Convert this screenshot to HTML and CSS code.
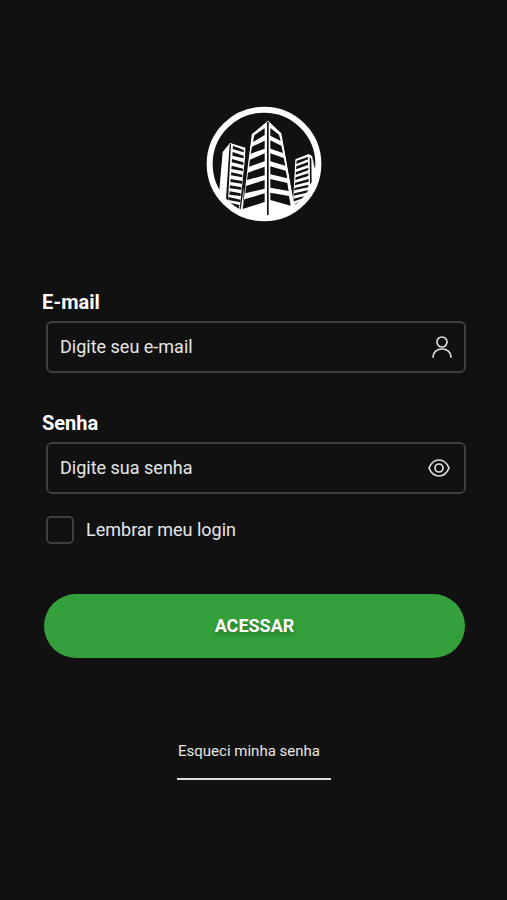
FILE: index.html
```html
<!DOCTYPE html>
<html lang="pt-BR">
<head>
<meta charset="utf-8">
<meta name="viewport" content="width=device-width, initial-scale=1">
<title>Login</title>
<link rel="stylesheet" href="styles.css">
</head>
<body>
<main class="login">
  <div class="brand">
    <svg class="logo" viewBox="0 0 384 384" role="img" aria-label="Logo">
      <defs><clipPath id="disc"><circle cx="192" cy="192" r="166"/></clipPath></defs>
      <g clip-path="url(#disc)">
        <path class="light" d="M40 260 58 270 68 156 90 129 136 143 136 190 128 326 155 103 204 62 244 100 284 318 280 290 286 178 326 162 336 168 350 210 350 384 40 384Z"/>
        <path class="dark" d="M163 106 194 84V105L159 126ZM156 140 194 122V146L152 161ZM150 179 194 160V184L147 200ZM144 218 194 200V226L141 240ZM138 258 194 240V266L136 280ZM133 298 194 280V306L128 327Z"/>
        <path class="dark" d="M211 84 237 104 242 123 211 107ZM211 121 244 137 249 159 211 146ZM211 160 251 174 256 197 211 184ZM211 199 257 212 262 235 211 223ZM211 237 262 249 266 273 211 263ZM211 278 267 288 272 317 211 300Z"/>
        <path class="dark" d="M201 66H206V346H201Z"/>
        <path class="dark" d="M89 133 93 132 84 304 78 296Z"/>
        <path class="dark" d="M99 137 131 150V157L98 147ZM98 156 131 167V175L97 167ZM96 177 130 187V195L95 187ZM95 197 129 206V213L94 207ZM94 217 127 224V232L93 226ZM92 237 126 243V251L91 246ZM90 256 124 262V269L89 265ZM89 274 122 280V288L88 284ZM86 291 121 299V307L85 300ZM82 306 118 315 117 328Z"/>
        <path class="dark" d="M137 155 155 103 122 328 119 328Z"/>
        <path class="dark" d="M290 182 324 171V178L289 192ZM289 199 324 186V195L288 208ZM288 216 325 203V211L287 224ZM287 232 325 220V228L286 240ZM286 248 326 237V245L284 256ZM284 264 325 254V262L282 271ZM283 280 326 270V277L281 287ZM281 296 314 288 309 295 282 304ZM286 311 304 301 296 312 287 315Z"/>
        <path class="dark" d="M329 170 334 178 335 246 330 254ZM336 170 354 216 345 207Z"/>
        <path class="dark" d="M246 102 285 178 278 287Z"/>
      </g>
      <circle class="ring" cx="192" cy="192" r="163"/>
    </svg>
  </div>
  <form class="form">
    <div class="field">
      <label class="label" for="email">E-mail</label>
      <div class="box">
        <input class="input" id="email" type="email" placeholder="Digite seu e-mail">
        <svg class="icon" viewBox="0 0 24 24" aria-hidden="true"><circle cx="12" cy="7" r="5"/><path d="M3 22c0-5 4-8 9-8s9 3 9 8"/></svg>
      </div>
    </div>
    <div class="field">
      <label class="label" for="senha">Senha</label>
      <div class="box box-eye">
        <input class="input" id="senha" type="password" placeholder="Digite sua senha">
        <svg class="icon" viewBox="0 0 24 24" aria-hidden="true"><path d="M2 12C4 7 8 4 12 4s8 3 10 8c-2 5-6 8-10 8S4 17 2 12Z"/><circle cx="12" cy="12" r="4"/></svg>
      </div>
    </div>
    <div class="remember">
      <input class="check" id="lembrar" type="checkbox">
      <label for="lembrar">Lembrar meu login</label>
    </div>
    <button class="submit" type="submit">ACESSAR</button>
  </form>
  <a class="forgot" href="#">Esqueci minha senha</a>
</main>
</body>
</html>
```
FILE: styles.css
```css
* { box-sizing: border-box; }
body {
  margin: 0;
  min-height: 100vh;
  background: #111;
  color: #e6e6e6;
  font-family: Roboto, "Liberation Sans", sans-serif;
  font-size: 18px;
  line-height: 24px;
}
.login {
  display: flex;
  flex-direction: column;
  padding: 100px 41px 40px 42px;
}
.brand {
  display: flex;
  justify-content: center;
  padding-left: 20px;
}
.logo { width: 128px; height: 128px; }
.light { fill: #fff; }
.dark { fill: #111; }
.ring { fill: none; stroke: #fff; stroke-width: 18; }
.form {
  display: flex;
  flex-direction: column;
  margin-top: 62px;
}
.field { margin-bottom: 37px; }
.label {
  display: block;
  margin-bottom: 7px;
  color: #fff;
  font-size: 20px;
  font-weight: 700;
  line-height: 24px;
}
.box {
  display: flex;
  align-items: center;
  height: 52px;
  margin-left: 4px;
  padding: 0 10px 0 12px;
  border: 2px solid #3f3f3f;
  border-radius: 6px;
}
.box-eye { padding-right: 13px; }
.field { margin-bottom: 38px; }
.field + .field { margin-bottom: 22px; }
.input {
  flex: 1;
  min-width: 0;
  padding: 0;
  border: 0;
  outline: 0;
  background: none;
  color: inherit;
  font: inherit;
}
.input::placeholder { color: #e6e6e6; opacity: 1; }
.icon {
  width: 24px;
  height: 24px;
  fill: none;
  stroke: #ddd;
  stroke-width: 1.7;
  stroke-linecap: round;
}
.remember {
  display: flex;
  align-items: center;
  gap: 12px;
  margin-left: 4px;
}
.check {
  appearance: none;
  width: 28px;
  height: 28px;
  margin: 0;
  border: 2px solid #3f3f3f;
  border-radius: 5px;
}
.check:checked { background: #33a03b; }
.submit {
  height: 64px;
  margin: 50px 1px 0 2px;
  border: 0;
  border-radius: 32px;
  background: #33a03b;
  color: #fff;
  font: inherit;
  font-weight: 700;
  text-shadow: 0 3px 4px rgb(0 0 0 / 25%);
}
.forgot {
  align-self: center;
  margin-top: 81px;
  padding: 0 11px 15px 1px;
  border-bottom: 2px solid #ddd;
  color: inherit;
  font-size: 15px;
  text-decoration: none;
}
```
